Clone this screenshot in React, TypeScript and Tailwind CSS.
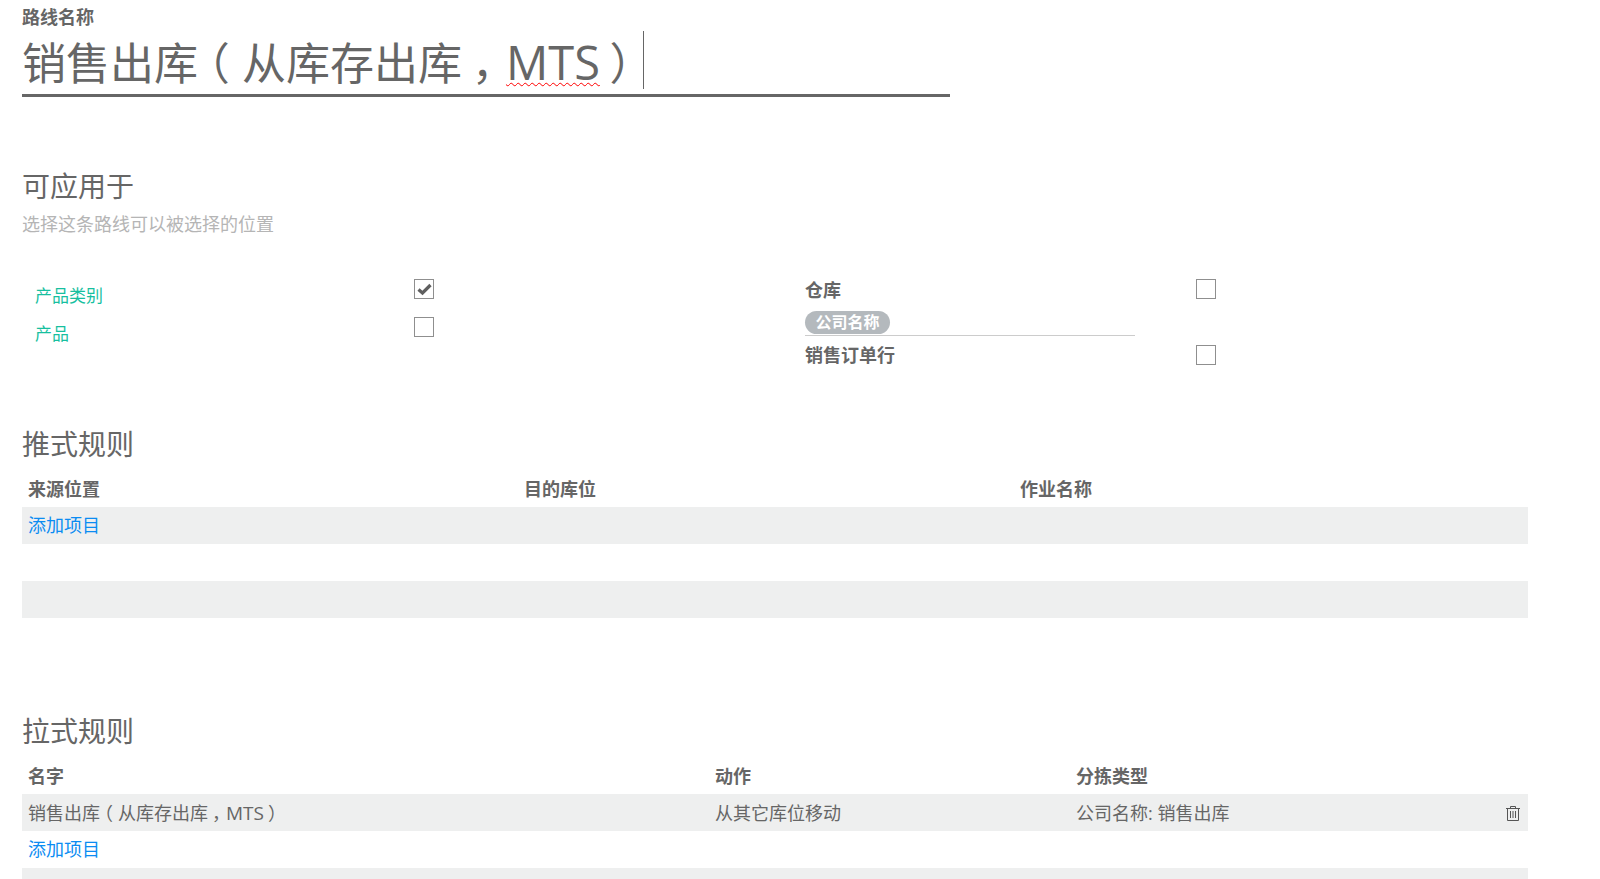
const font = '"Open Sans","Noto Sans CJK SC",sans-serif';

function Box({ checked = false }: { checked?: boolean }) {
  return (
    <div className="w-5 h-5 border border-[#8f8f8f] flex items-center justify-center shrink-0">
      {checked && (
        <svg width="15" height="13" viewBox="0 0 15 13">
          <path d="M1.5 6.5 L5.5 10 L13.5 2" fill="none" stroke="#5f5f5f" strokeWidth="3.2" />
        </svg>
      )}
    </div>
  );
}

function Trash() {
  return (
    <svg width="14" height="15" viewBox="0 0 14 15" fill="none" stroke="#555" strokeWidth="1">
      <path d="M0 2.5H14" />
      <path d="M4.5 2.5V0.5H9.5V2.5" />
      <path d="M1.5 2.5V14.5H12.5V2.5" />
      <path d="M4.5 5V12M7 5V12M9.5 5V12" />
    </svg>
  );
}

function Add() {
  return <span className="text-[#0b8cf2] text-[18px]">添加项目</span>;
}

function H({ children }: { children: string }) {
  return <div className="text-[28px] leading-[36px] text-[#666]">{children}</div>;
}

function RouteName({ wavy = false }: { wavy?: boolean }) {
  return (
    <>
      销售出库
      <span className="[font-feature-settings:'halt'] pl-[0.22em] pr-[0.28em]">（</span>
      从库存出库
      <span className="[font-feature-settings:'halt'] pl-[0.22em] pr-[0.28em]">，</span>
      <span className={wavy ? "text-[47px] underline decoration-wavy decoration-[#f00] decoration-1 underline-offset-2" : "text-[19px]"}>MTS</span>
      <span className="[font-feature-settings:'halt'] pl-[0.22em] pr-[0.26em]">）</span>
    </>
  );
}

export default function App() {
  return (
    <div className="w-[1600px] h-[879px] overflow-hidden bg-white pl-[22px] text-[#666]" style={{ fontFamily: font }}>
      <div className="w-[1506px]">
        <div className="pt-[5px] h-[31px] text-[18px] leading-[24px] font-bold">路线名称</div>
        <div className="w-[928px] h-[66px] border-b-[3px] border-[#666] flex items-start">
          <div className="text-[44px] leading-[62px] whitespace-nowrap">
            <RouteName wavy />
          </div>
          <div className="w-px h-[58px] bg-[#666]" />
        </div>

        <div className="mt-[71px]"><H>可应用于</H></div>
        <div className="text-[18px] leading-[24px] text-[#b5b5b5] mt-[8px]">选择这条路线可以被选择的位置</div>

        <div className="flex mt-[43px]">
          <div className="w-[783px] flex flex-col">
            <div className="flex h-[38px] pl-[13px]">
              <div className="w-[379px] text-[#17bf9f] text-[17px] leading-[24px] pt-[5px]">产品类别</div>
              <Box checked />
            </div>
            <div className="flex h-[38px] pl-[13px]">
              <div className="w-[379px] text-[#17bf9f] text-[17px] leading-[24px] pt-[5px]">产品</div>
              <Box />
            </div>
          </div>
          <div className="flex w-[411px] justify-between">
            <div className="w-[330px]">
              <div className="text-[18px] leading-[24px] font-bold -mt-[1px]">仓库</div>
              <div className="border-b border-[#ccc] h-[34px] pt-[8px]">
                <span className="inline-block h-[23px] w-[85px] rounded-full bg-[#b4b9bd] text-white font-bold text-[16px] leading-[23px] text-center">公司名称</span>
              </div>
              <div className="text-[18px] leading-[24px] font-bold mt-[7px]">销售订单行</div>
            </div>
            <div className="flex flex-col gap-[46px]">
              <Box />
              <Box />
            </div>
          </div>
        </div>

        <div className="mt-[59px]"><H>推式规则</H></div>
        <div className="grid grid-cols-[496px_496px_1fr] px-[6px] pt-[10px] h-[45px] items-center text-[18px] font-bold">
          <div>来源位置</div><div>目的库位</div><div>作业名称</div>
        </div>
        <div className="h-[37px] bg-[#eeefef] px-[6px] flex items-center"><Add /></div>
        <div className="h-[37px]" />
        <div className="h-[37px] bg-[#eeefef]" />

        <div className="mt-[95px]"><H>拉式规则</H></div>
        <div className="grid grid-cols-[687px_361px_1fr] px-[6px] pt-[10px] h-[45px] items-center text-[18px] font-bold">
          <div>名字</div><div>动作</div><div>分拣类型</div>
        </div>
        <div className="h-[37px] bg-[#eeefef] pl-[6px] pr-[8px] pt-[2px] flex items-center text-[18px]">
          <div className="w-[687px]"><RouteName /></div>
          <div className="w-[361px]">从其它库位移动</div>
          <div className="flex-1">公司名称: 销售出库</div>
          <Trash />
        </div>
        <div className="h-[37px] px-[6px] flex items-center"><Add /></div>
        <div className="h-[40px] bg-[#eeefef]" />
      </div>
    </div>
  );
}
